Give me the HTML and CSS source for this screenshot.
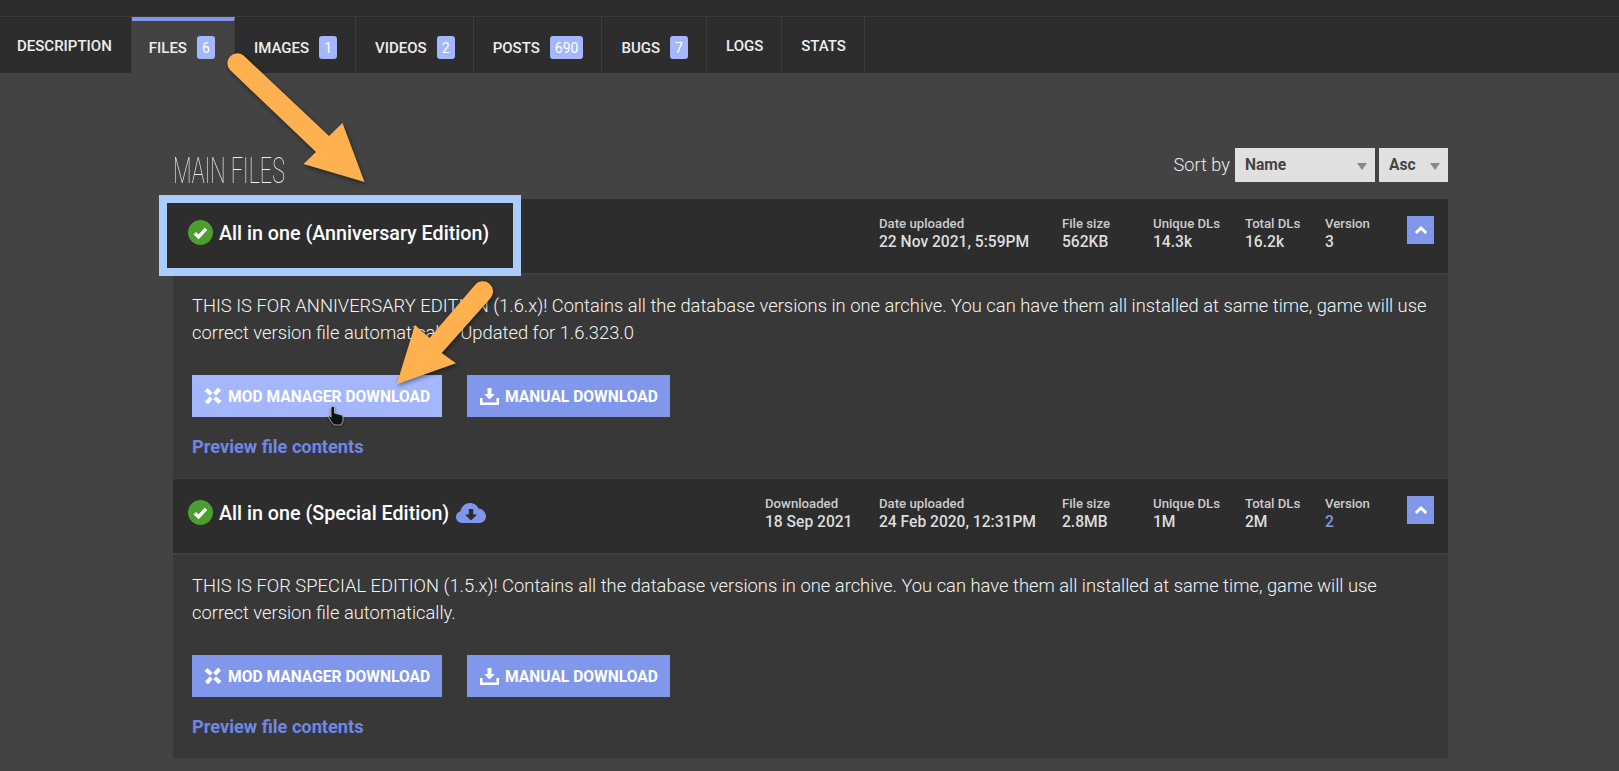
FILE: index.html
```html
<!DOCTYPE html>
<html lang="en">
<head>
<meta charset="utf-8">
<title>Files</title>
<link rel="stylesheet" href="styles.css">
</head>
<body>
<div class="page">
  <div class="top-bar"></div>
  <nav class="tabs">
    <a class="tab plain">Description</a>
    <a class="tab active">Files <span class="badge">6</span></a>
    <a class="tab">Images <span class="badge">1</span></a>
    <a class="tab">Videos <span class="badge">2</span></a>
    <a class="tab">Posts <span class="badge">690</span></a>
    <a class="tab">Bugs <span class="badge">7</span></a>
    <a class="tab plain">Logs</a>
    <a class="tab plain">Stats</a>
  </nav>
  <main class="content">
    <div class="toolbar">
      <h2 class="heading">Main files</h2>
      <div class="sort">
        <span class="sort-label">Sort by</span>
        <div class="select select-name">Name</div>
        <div class="select select-dir">Asc</div>
      </div>
    </div>

    <section class="file">
      <header class="file-head">
        <h3 class="file-title highlighted">
          <svg class="check" viewBox="0 0 25 25"><circle cx="12.5" cy="12.5" r="12.5" fill="#4c9f2f"/><path d="M6.800 13.200l3.800 3.600 7.400-8" fill="none" stroke="#fff" stroke-width="3.400"/></svg>
          All in one (Anniversary Edition)
        </h3>
        <div class="meta">
          <div class="stat"></div>
          <div class="stat"><span class="stat-label">Date uploaded</span><span class="stat-value">22 Nov 2021, 5:59PM</span></div>
          <div class="stat"><span class="stat-label">File size</span><span class="stat-value">562KB</span></div>
          <div class="stat"><span class="stat-label">Unique DLs</span><span class="stat-value">14.3k</span></div>
          <div class="stat"><span class="stat-label">Total DLs</span><span class="stat-value">16.2k</span></div>
          <div class="stat"><span class="stat-label">Version</span><span class="stat-value">3</span></div>
        </div>
        <button class="toggle"><svg viewBox="0 0 14 10" class="chevron"><path d="M1.800 8L7 3l5.200 5" fill="none" stroke="#fff" stroke-width="3"/></svg></button>
      </header>
      <div class="file-body">
        <p class="desc">THIS IS FOR ANNIVERSARY EDITION (1.6.x)! Contains all the database versions in one archive. You can have them all installed at same time, game will use correct version file automatically. Updated for 1.6.323.0</p>
        <div class="actions">
          <a class="btn btn-mod hover"><svg class="btn-icon" viewBox="0 0 18 18"><path d="M.5 4L3.500 1 8.800 6 5.800 8.600zM14 .5L17 3.500 12 8.800 9.400 5.800zM17.500 14L14.500 17 9.200 12 12.200 9.400zM4 17.500L1 14.500 6 9.200 8.600 12.200z" fill="#fff"/></svg><span>Mod manager download</span></a>
          <a class="btn btn-manual"><svg class="btn-icon" viewBox="0 0 19 17"><path d="M7.500 0h4v6h3.300L9.500 11.500 4.200 6h3.300zM0 10h2.500v4.500h14V10H19v7H0z" fill="#fff"/></svg><span>Manual download</span></a>
        </div>
        <a class="preview">Preview file contents</a>
      </div>
    </section>

    <section class="file">
      <header class="file-head">
        <h3 class="file-title">
          <svg class="check" viewBox="0 0 25 25"><circle cx="12.5" cy="12.5" r="12.5" fill="#4c9f2f"/><path d="M6.800 13.200l3.800 3.600 7.400-8" fill="none" stroke="#fff" stroke-width="3.400"/></svg>
          All in one (Special Edition)
          <svg class="cloud" viewBox="0 0 30 20"><path d="M6.500 20C2.800 20 0 17.400 0 14c0-2.800 1.800-5 4.400-5.800C5.400 3.400 9.300 0 14 0c3.900 0 7.300 2.300 8.800 5.800.5-.1 1-.1 1.300-.1C27.400 6.500 30 10 30 13.500S27.200 20 23.500 20z" fill="#7f96ea"/><path d="M12.800 6h4.400v5.500h3.800L15 17.500l-6-6h3.800z" fill="#2d2d2d"/></svg>
        </h3>
        <div class="meta">
          <div class="stat"><span class="stat-label">Downloaded</span><span class="stat-value">18 Sep 2021</span></div>
          <div class="stat"><span class="stat-label">Date uploaded</span><span class="stat-value">24 Feb 2020, 12:31PM</span></div>
          <div class="stat"><span class="stat-label">File size</span><span class="stat-value">2.8MB</span></div>
          <div class="stat"><span class="stat-label">Unique DLs</span><span class="stat-value">1M</span></div>
          <div class="stat"><span class="stat-label">Total DLs</span><span class="stat-value">2M</span></div>
          <div class="stat"><span class="stat-label">Version</span><span class="stat-value version-link">2</span></div>
        </div>
        <button class="toggle"><svg viewBox="0 0 14 10" class="chevron"><path d="M1.800 8L7 3l5.200 5" fill="none" stroke="#fff" stroke-width="3"/></svg></button>
      </header>
      <div class="file-body">
        <p class="desc">THIS IS FOR SPECIAL EDITION (1.5.x)! Contains all the database versions in one archive. You can have them all installed at same time, game will use correct version file automatically.</p>
        <div class="actions">
          <a class="btn btn-mod"><svg class="btn-icon" viewBox="0 0 18 18"><path d="M.5 4L3.500 1 8.800 6 5.800 8.600zM14 .5L17 3.500 12 8.800 9.400 5.800zM17.500 14L14.500 17 9.200 12 12.200 9.400zM4 17.500L1 14.500 6 9.200 8.600 12.200z" fill="#fff"/></svg><span>Mod manager download</span></a>
          <a class="btn btn-manual"><svg class="btn-icon" viewBox="0 0 19 17"><path d="M7.500 0h4v6h3.300L9.500 11.500 4.200 6h3.300zM0 10h2.500v4.500h14V10H19v7H0z" fill="#fff"/></svg><span>Manual download</span></a>
        </div>
        <a class="preview">Preview file contents</a>
      </div>
    </section>
  </main>

  <svg class="annotations" viewBox="0 0 1619 771">
    <g class="arrow">
      <path d="M243 55L329 136 342.500 123 364.500 182 303.500 164 316 152 230 70A10 10 0 0 1 243 55z"/>
      <path d="M475 285L429.500 338 415 325 396.700 384.300 456 363.300 441.700 353 490.700 298A10 10 0 0 0 475 285z"/>
    </g>
    <path class="hand" d="M333 406q1.500 0 1.500 2v5l7 2q1.500.5 1.500 2v4l-2 4h-7l-4-5-1.500-3q-.5-2 1.500-1l1 1v-9q0-2 2.500-2z"/>
  </svg>
</div>
</body>
</html>
```
FILE: styles.css
```css
* { box-sizing: border-box; }
html, body { margin: 0; padding: 0; }
body {
  background: #434343;
  font-family: Roboto, "Liberation Sans", sans-serif;
  color: #eee;
  overflow: hidden;
}
.page { position: relative; width: 1619px; height: 771px; overflow: hidden; }
.top-bar { height: 17px; background: #2d2d2d; border-bottom: 1px solid #3a3a3a; }
.tabs { display: flex; height: 56px; background: #2d2d2d; }
.tab {
  display: flex;
  align-items: center;
  gap: 10px;
  padding: 5px 18px 0 19px;
  border-right: 1px solid #3d3d3d;
  font-size: 15px;
  font-weight: 500;
  text-transform: uppercase;
  color: #eee;
}
.tab.plain { padding-top: 1px; }
.tab.active { background: #434343; border-top: 4px solid #7f96ea; padding: 1px 19px 0 17px; }
.tab:first-child { padding-left: 17px; padding-right: 19px; }
.badge {
  min-width: 18px;
  height: 23px;
  padding: 0 5px;
  display: flex;
  align-items: center;
  justify-content: center;
  background: #a4b7fd;
  border-radius: 3px;
  color: #fff;
  font-size: 14px;
  font-weight: 400;
}
.content { padding: 75px 171px 0 173px; }
.toolbar { display: flex; justify-content: space-between; align-items: center; height: 34px; margin-bottom: 17px; }
.heading {
  margin: 12px 0 0;
  font-size: 36px;
  font-weight: 100;
  color: #eee;
  text-transform: uppercase;
  transform: scaleX(0.6);
  transform-origin: left center;
}
.sort { display: flex; align-items: center; }
.sort-label { font-size: 18.200px; font-weight: 300; color: #eee; margin-right: 5px; margin-top: -2px; }
.select {
  position: relative;
  height: 34px;
  background: #e0e0e0;
  color: #444;
  font-size: 15.600px;
  font-weight: 700;
  line-height: 34px;
  padding-left: 10px;
}
.select::after {
  content: "";
  position: absolute;
  right: 8px;
  top: 15px;
  border-left: 5px solid transparent;
  border-right: 5px solid transparent;
  border-top: 7px solid #888;
}
.select-name { width: 140px; }
.select-dir { width: 69px; margin-left: 4px; }
.file { background: #383838; }
.file-head {
  display: flex;
  height: 76px;
  padding: 17px 14px 0 15px;
  background: #2d2d2d;
  border-bottom: 2px solid #3f3f3f;
}
.file-title {
  position: relative;
  isolation: isolate;
  display: flex;
  align-items: center;
  gap: 6px;
  height: 25px;
  margin: 4px 0 0;
  padding-top: 2px;
  font-size: 19.700px;
  font-weight: 500;
  color: #fff;
  white-space: nowrap;
}
.highlighted::before {
  content: "";
  position: absolute;
  box-sizing: border-box;
  left: -29px;
  top: -25px;
  width: 362px;
  height: 81px;
  z-index: -1;
  background: #2d2d2d;
  border: 8px solid #abcdfd;
}
.check { width: 25px; height: 25px; flex: none; margin-top: -2px; }
.cloud { width: 30px; height: 20px; margin-top: -1px; margin-left: 1px; }
.meta {
  display: grid;
  grid-template-columns: 114px 183px 91px 92px 80px 82px;
  margin-left: auto;
  margin-top: -1px;
}
.stat { display: flex; flex-direction: column; line-height: 18px; }
.stat-label { font-size: 13.200px; font-weight: 500; color: #ccc; }
.stat-value { font-size: 15.600px; font-weight: 500; color: #ddd; }
.version-link { color: #7f96ea; }
.toggle {
  display: flex;
  align-items: center;
  justify-content: center;
  width: 27px;
  height: 28px;
  padding: 0;
  border: 0;
  background: #8197ec;
}
.chevron { width: 14px; height: 10px; }
.file-body { height: 204px; padding: 17px 18px 0 19px; border-bottom: 1px solid #3f3f3f; }
.desc { margin: 0; font-size: 18.360px; font-weight: 300; line-height: 27px; color: #f5f5f5; }
.actions { display: flex; gap: 25px; margin-top: 29px; }
.btn {
  display: flex;
  align-items: center;
  gap: 6px;
  height: 42px;
  font-size: 15.600px;
  font-weight: 700;
  text-transform: uppercase;
  color: #fff;
  background: #8197ec;
}
.btn span { padding-top: 1px; }
.btn-mod { width: 250px; padding-left: 12px; }
.btn-manual { width: 203px; padding-left: 13px; }
.btn.hover { background: #a4b7fd; }
.btn-icon { width: 18px; height: 18px; flex: none; }
.btn-manual .btn-icon { width: 19px; height: 17px; }
.preview { display: block; margin-top: 20px; font-size: 18.200px; font-weight: 700; line-height: 20px; color: #7087e6; }
.annotations { position: absolute; left: 0; top: 0; width: 1619px; height: 771px; pointer-events: none; }
.arrow { fill: #feb14e; filter: drop-shadow(1px 2px 2px rgba(0,0,0,.45)); }
.hand { fill: #111; stroke: #ddd; stroke-width: .7; filter: drop-shadow(0 1px 1px rgba(0,0,0,.6)); }
```
